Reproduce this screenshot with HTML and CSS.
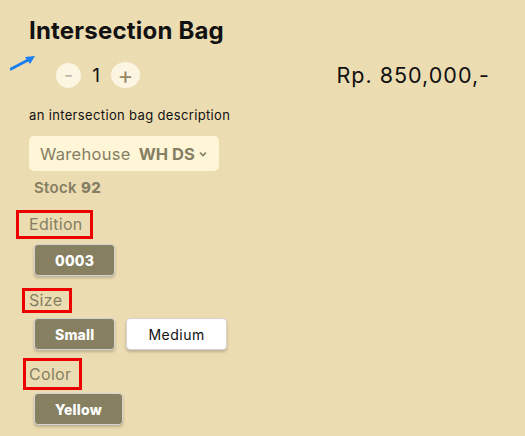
FILE: index.html
```html
<!DOCTYPE html>
<html lang="en">
<head>
    <title>Intersection Bag</title>
    <link rel="stylesheet" href="styles.css">
</head>
<body>
    <div class="product">
        <h1 class="title">Intersection Bag</h1>

        <div class="buy-row">
            <svg class="pointer" width="26" height="16" viewBox="0 0 26 16">
                <path d="M1 14 L20 4" stroke="#1a7ff0" stroke-width="3" stroke-linecap="round"/>
                <path d="M25 1 L15 2 L20 9 Z" fill="#1a7ff0"/>
            </svg>
            <div class="qty">
                <button class="qty-btn minus">-</button>
                <span class="qty-num">1</span>
                <button class="qty-btn plus">+</button>
            </div>
            <div class="price">Rp. 850,000,-</div>
        </div>

        <p class="desc">an intersection bag description</p>

        <div class="warehouse">
            <span>Warehouse</span>
            <b>WH DS</b>
            <svg class="chev" width="8" height="6" viewBox="0 0 8 6">
                <path d="M1 1.5 L4 4.5 L7 1.5" fill="none" stroke="#857e62" stroke-width="1.6"/>
            </svg>
        </div>

        <div class="stock">Stock <b>92</b></div>

        <div class="option">
            <span class="opt-label edition">Edition</span>
            <div class="chips">
                <button class="chip active">0003</button>
            </div>
        </div>

        <div class="option">
            <span class="opt-label size">Size</span>
            <div class="chips">
                <button class="chip active">Small</button>
                <button class="chip">Medium</button>
            </div>
        </div>

        <div class="option">
            <span class="opt-label color">Color</span>
            <div class="chips">
                <button class="chip active">Yellow</button>
            </div>
        </div>
    </div>
</body>
</html>
```

FILE: styles.css
```css
*{
    margin: 0;
    box-sizing: border-box;
}
body{
    background-color: #ecdcb2;
    font-family: 'Inter', 'Noto Sans', sans-serif;
    color: #111;
    height: 436px;
    overflow: hidden;
}

.product{
    padding: 14px 35px 0 29px;
    position: relative;
}
.title{
    font-size: 24px;
    font-weight: 700;
    line-height: 34px;
    letter-spacing: 0.2px;
}

.buy-row{
    display: flex;
    align-items: center;
    margin-top: 14px;
    position: relative;
}
.pointer{
    position: absolute;
    left: -19px;
    top: -7px;
}
.qty{
    display: flex;
    align-items: center;
    margin-left: 27px;
}
.qty-btn{
    border: none;
    background-color: #fbf5e2;
    border-radius: 50%;
    width: 25px;
    height: 25px;
    padding: 0;
    font-family: inherit;
    font-size: 20px;
    line-height: 25px;
}
.minus{
    color: #b9b4a4;
}
.plus{
    width: 29px;
    height: 26px;
    color: #9a8a66;
    font-size: 24px;
}
.qty-num{
    font-size: 19px;
    width: 30px;
    text-align: center;
}
.price{
    margin-left: auto;
    font-size: 21.5px;
    letter-spacing: 1px;
}

.desc{
    font-size: 13px;
    letter-spacing: 0.35px;
    margin-top: 19px;
}

.warehouse{
    display: inline-flex;
    align-items: center;
    gap: 8px;
    background-color: #fff6d7;
    border-radius: 5px;
    width: 190px;
    height: 35px;
    padding: 0 8px 0 11px;
    margin-top: 13px;
    color: #857e62;
    font-size: 16.5px;
    letter-spacing: 0.3px;
    white-space: nowrap;
}
.warehouse b{
    letter-spacing: 0;
}
.chev{
    margin-left: -4px;
}

.stock{
    color: #857e62;
    font-size: 15px;
    font-weight: 600;
    letter-spacing: 0.3px;
    margin: 7px 0 0 5px;
}
.stock b{
    font-weight: 800;
}

.option{
    display: flex;
    flex-direction: column;
    align-items: flex-start;
}
.opt-label{
    border: 3px solid #ee0000;
    color: #857e62;
    font-size: 16px;
    letter-spacing: 0.3px;
}
.edition{
    width: 77px;
    height: 29px;
    line-height: 23px;
    margin: 13px 0 0 -13px;
    padding-left: 10px;
}
.size{
    width: 50px;
    height: 25px;
    line-height: 19px;
    margin: 12px 0 0 -7px;
    padding-left: 4px;
}
.color{
    width: 59px;
    height: 32px;
    line-height: 26px;
    margin: 8px 0 0 -6px;
    padding-left: 3px;
}
.chips{
    display: flex;
    gap: 11px;
    margin: 5px 0 0 5px;
}
.color + .chips{
    margin-top: 3px;
}
.chip{
    height: 32px;
    padding: 0 21px;
    border: 1px solid #d3d3d3;
    border-radius: 4px;
    background-color: white;
    color: #111;
    font-family: inherit;
    font-size: 14px;
    letter-spacing: 0.5px;
    box-shadow: 0 2px 3px rgba(0, 0, 0, 0.2);
}
.chip.active{
    padding: 0 20px;
    background-color: #868061;
    color: white;
    font-weight: 800;
    letter-spacing: 0.2px;
}
```
